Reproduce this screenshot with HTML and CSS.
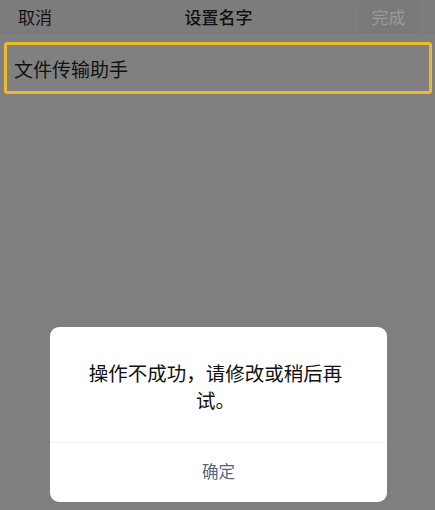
FILE: index.html
```html
<!DOCTYPE html>
<html lang="zh-CN">
<head>
<meta charset="UTF-8">
<meta name="viewport" content="width=device-width, initial-scale=1.0">
<title>设置名字</title>
<link rel="stylesheet" href="styles.css">
</head>
<body>
<div class="page">
  <div class="top-bar">
    <span class="cancel">取消</span>
    <span class="title">设置名字</span>
    <span class="done">完成</span>
  </div>
  <div class="name-box">文件传输助手</div>
</div>
<div class="dialog">
  <div class="dialog-msg">操作不成功，请修改或稍后再试。</div>
  <div class="dialog-btn">确定</div>
</div>
</body>
</html>
```

FILE: styles.css
```css
body {
  margin: 0;
  width: 435px;
  height: 510px;
  overflow: hidden;
  position: relative;
  background: #7f7f7f;
  font-family: "Noto Sans CJK SC", "Noto Sans", sans-serif;
  color: #111;
}
.page {
  display: flex;
  flex-direction: column;
}
.top-bar {
  height: 34px;
  display: flex;
  align-items: center;
  justify-content: space-between;
  padding: 0 17px 0 18px;
  background: #7c7c7c;
  font-size: 17px;
}
.cancel {
  width: 60px;
  margin-top: -1px;
}
.title {
  font-weight: 500;
  margin-top: -2px;
}
.done {
  width: 59px;
  height: 33px;
  margin-top: -1px;
  display: flex;
  align-items: center;
  justify-content: center;
  background: #797979;
  color: #999;
  border-radius: 2px;
}
.name-box {
  margin: 8px 3px 0 4px;
  height: 46px;
  border: 3px solid #ecb92c;
  border-radius: 3px;
  background: #808080;
  display: flex;
  align-items: center;
  padding-left: 7px;
  font-size: 19px;
}
.dialog {
  position: absolute;
  left: 50px;
  top: 327px;
  width: 337px;
  height: 175px;
  background: #fff;
  border-radius: 9px;
  display: flex;
  flex-direction: column;
}
.dialog-msg {
  height: 116px;
  padding: 32px 38px 0 32px;
  box-sizing: border-box;
  font-size: 19.5px;
  line-height: 27px;
  text-align: center;
  border-bottom: 1px solid #f0f0f0;
}
.dialog-btn {
  flex: 1;
  display: flex;
  align-items: center;
  justify-content: center;
  font-size: 16.5px;
  color: #56617c;
  padding-bottom: 3px;
}
```
